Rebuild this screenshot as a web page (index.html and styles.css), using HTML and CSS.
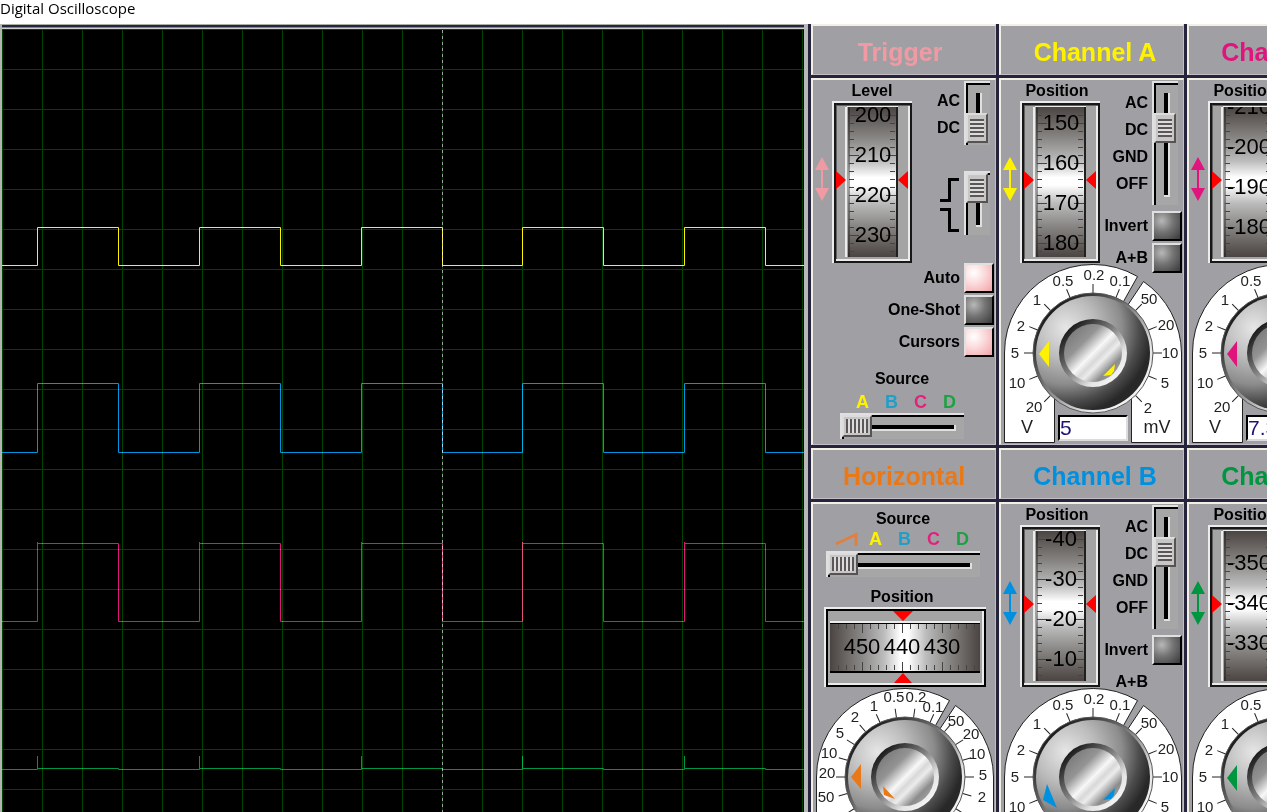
FILE: index.html
```
<!DOCTYPE html>
<html lang="en">
<head>
    <meta charset="utf-8">
    <title>Digital Oscilloscope</title>
    <link rel="stylesheet" href="styles.css">
</head>
<body>
    <!-- shared drawings -->
    <svg class="defs" width="0" height="0" aria-hidden="true">
        <defs>
            <pattern id="grid" width="40" height="40" patternUnits="userSpaceOnUse">
                <path d="M0 0.5H40M0.5 0V40" stroke="#004400" fill="none"/>
            </pattern>
            <linearGradient id="drumV" x1="0" y1="0" x2="0" y2="1">
                <stop offset="0" stop-color="#4a4442"/>
                <stop offset="0.2" stop-color="#868482"/>
                <stop offset="0.36" stop-color="#bcbcbc"/>
                <stop offset="0.47" stop-color="#fff"/>
                <stop offset="0.52" stop-color="#fff"/>
                <stop offset="0.64" stop-color="#bcbcbc"/>
                <stop offset="0.8" stop-color="#868482"/>
                <stop offset="1" stop-color="#4a4442"/>
            </linearGradient>
            <linearGradient id="drumH" href="#drumV" x2="1" y2="0"/>
            <linearGradient id="rim" x1="0.15" y1="0.15" x2="0.85" y2="0.85">
                <stop offset="0" stop-color="#1c1c1c"/>
                <stop offset="0.45" stop-color="#808080"/>
                <stop offset="0.8" stop-color="#e4e4e4"/>
                <stop offset="1" stop-color="#f4f4f4"/>
            </linearGradient>
            <radialGradient id="body" cx="0.26" cy="0.28" r="0.76">
                <stop offset="0" stop-color="#e6e6e6"/>
                <stop offset="0.35" stop-color="#bcbcbc"/>
                <stop offset="0.65" stop-color="#8c8c8c"/>
                <stop offset="0.85" stop-color="#4c4c4c"/>
                <stop offset="1" stop-color="#282828"/>
            </radialGradient>
            <linearGradient id="cap" x1="0.1" y1="0.1" x2="0.9" y2="0.9">
                <stop offset="0" stop-color="#787878"/>
                <stop offset="0.28" stop-color="#949494"/>
                <stop offset="0.5" stop-color="#f8f8f8"/>
                <stop offset="0.6" stop-color="#d8d8d8"/>
                <stop offset="0.68" stop-color="#ececec"/>
                <stop offset="0.85" stop-color="#8c8c8c"/>
                <stop offset="1" stop-color="#a4a4a4"/>
            </linearGradient>

            <symbol id="arrows" viewBox="0 0 14 52">
                <path d="M6 0L13 13H7V31H13L6 44L-1 31H5V13H-1Z" fill="currentColor"/>
            </symbol>

            <g id="frame">
                <path d="M0 162V0H80V2H2V162Z" fill="#ececec"/>
                <path d="M2 2H80V162H2Z" fill="#181818"/>
                <path d="M4 4H78V160H4Z" fill="#a4a4a4"/>
                <path d="M4 4H5V160H4ZM4 4H78V5H4Z" fill="#606060"/>
                <path d="M76 5H78V160H4V158H76ZM13 6H15V156H13ZM15 5H66V6H15Z" fill="#ececec"/>
                <path d="M16 6H65V156H16Z" fill="url(#drumV)"/>
                <path d="M64 6H66V156H64Z" fill="#202020"/>
                <path d="M16 6H18V156H16Z" fill="#000" opacity="0.35"/>
                <path d="M4 70L14 79L4 88ZM76 70L66 79L76 88Z" fill="#f00"/>
            </g>
            <g id="ticks" stroke="#444" fill="none">
                <path stroke-width="5" stroke-dasharray="1 7" d="M3.5 -40V200M44.5 -40V200"/>
                <path stroke-width="10" stroke-dasharray="1 39" d="M6 -40V200M43 -40V200"/>
            </g>

            <g id="face">
                <circle cx="90" cy="90" r="60" fill="url(#rim)" stroke="#555"/>
                <circle cx="90" cy="90" r="57" fill="url(#body)"/>
                <circle cx="90" cy="90" r="34" fill="url(#rim)"/>
                <circle cx="90" cy="90" r="29" fill="url(#cap)"/>
            </g>
            <g id="plate" fill="#fff" stroke="#222">
                <path d="M1.5 179.5V90A88.5 88.5 0 0 1 134.500 13.500L120.500 38.500L90 90L51.500 133.500V179.500Z"/>
                <path d="M140.500 18.500A88.500 88.500 0 0 1 178.500 90V179.500H128.500V133.500L90 90L124.500 42.500Z"/>
            </g>
            <g id="voltKnob">
                <use href="#plate"/>
                <g stroke="#222">
                    <path id="t" d="M90 21V30"/>
                    <use href="#t" transform="rotate(22.5 90 90)"/>
                    <use href="#t" transform="rotate(45 90 90)"/>
                    <use href="#t" transform="rotate(67.5 90 90)"/>
                    <use href="#t" transform="rotate(90 90 90)"/>
                    <use href="#t" transform="rotate(112.5 90 90)"/>
                    <use href="#t" transform="rotate(135 90 90)"/>
                    <use href="#t" transform="rotate(-22.5 90 90)"/>
                    <use href="#t" transform="rotate(-45 90 90)"/>
                    <use href="#t" transform="rotate(-67.5 90 90)"/>
                    <use href="#t" transform="rotate(-90 90 90)"/>
                    <use href="#t" transform="rotate(-112.5 90 90)"/>
                    <use href="#t" transform="rotate(-135 90 90)"/>
                </g>
                <use href="#face"/>
                <g class="scale">
                    <text x="31" y="149">20</text>
                    <text x="14" y="125">10</text>
                    <text x="12" y="95">5</text>
                    <text x="18" y="68">2</text>
                    <text x="34" y="42">1</text>
                    <text x="60" y="23">0.5</text>
                    <text x="91" y="17">0.2</text>
                    <text x="117" y="23">0.1</text>
                    <text x="146" y="41">50</text>
                    <text x="163" y="67">20</text>
                    <text x="167" y="95">10</text>
                    <text x="162" y="125">5</text>
                    <text x="145" y="150">2</text>
                    <text class="unit" x="24" y="170">V</text>
                    <text class="unit" x="154" y="170">mV</text>
                </g>
            </g>
        </defs>
    </svg>

    <header class="titlebar">Digital Oscilloscope</header>

    <main class="scope">
        <section class="screen">
            <svg width="100%" height="100%">
                <rect width="100%" height="100%" fill="url(#grid)"/>
                <path class="cursor" d="M440.5 1V843"/>
                <path class="trace trace-a" d="M-1 236.500H35.500V198.500H116.500V236.500H197.500V198.500H278.500V236.500H359.500V198.500H440.500V236.500H520.500V198.500H601.500V236.500H682.500V198.500H763.500V236.500H803"/>
                <path class="trace trace-b" d="M-1 423.500H35.500V354.500H116.500V423.500H197.500V354.500H278.500V423.500H359.500V354.500H440.500V423.500H520.500V354.500H601.500V423.500H682.500V354.500H763.500V423.500H803"/>
                <path class="trace trace-c" d="M-1 592.500H35.500V513V514.500H116.500V592.500H197.500V513V514.500H278.500V592.500H359.500V513V514.500H440.500V592.500H520.500V513V514.500H601.500V592.500H682.500V513V514.500H763.500V592.500H803"/>
                <path class="trace trace-d" d="M-1 740.500H35.500V727V739.500H116.500V740.500H197.500V727V739.500H278.500V740.500H359.500V727V739.500H440.500V740.500H520.500V727V739.500H601.500V740.500H682.500V727V739.500H763.500V740.500H803"/>
            </svg>
        </section>

        <div class="controls">
            <section class="panel trigger">
                <h2 class="panel-title">Trigger</h2>
                <div class="panel-body">
                    <div class="upper">
                        <svg class="arrows"><use href="#arrows"/></svg>
                        <div class="wheel">
                            <span class="wheel-label">Level</span>
                            <svg width="80" height="162">
                                <use href="#frame"/>
                                <svg x="16" y="6" width="49" height="150">
                                    <g transform="translate(0 8)">
                                        <use href="#ticks"/>
                                        <g class="digits">
                                            <text x="25" y="7">200</text>
                                            <text x="25" y="47">210</text>
                                            <text x="25" y="87">220</text>
                                            <text x="25" y="127">230</text>
                                        </g>
                                    </g>
                                </svg>
                            </svg>
                        </div>
                        <div class="side">
                            <div class="switch-row">
                                <div class="options"><span>AC</span><span>DC</span></div>
                                <input class="switch" type="range" min="0" max="1" value="1" aria-label="Trigger coupling">
                            </div>
                            <div class="switch-row edge">
                                <svg width="20" height="64" fill="none" stroke="#000" stroke-width="3">
                                    <path d="M0 29.500H9.500V8.500H19M0 38.500H9.500V59.500H19"/>
                                </svg>
                                <input class="switch" type="range" min="0" max="1" value="0" aria-label="Trigger edge">
                            </div>
                        </div>
                    </div>
                    <div class="buttons">
                        <label class="button-row">Auto <input class="lamp" type="checkbox" checked></label>
                        <label class="button-row">One-Shot <input class="lamp" type="checkbox"></label>
                        <label class="button-row">Cursors <input class="lamp" type="checkbox" checked></label>
                    </div>
                    <div class="source">
                        <label for="triggerSource">Source</label>
                        <div class="letters"><b class="a">A</b><b class="b">B</b><b class="c">C</b><b class="d">D</b></div>
                        <input class="slider" id="triggerSource" type="range" min="0" max="3" value="0">
                    </div>
                </div>
            </section>

            <section class="panel channel channel-a">
                <h2 class="panel-title">Channel A</h2>
                <div class="panel-body">
                    <div class="upper">
                        <svg class="arrows"><use href="#arrows"/></svg>
                        <div class="wheel">
                            <span class="wheel-label">Position</span>
                            <svg width="80" height="162">
                                <use href="#frame"/>
                                <svg x="16" y="6" width="49" height="150">
                                    <g transform="translate(0 16)">
                                        <use href="#ticks"/>
                                        <g class="digits">
                                            <text x="25" y="7">150</text>
                                            <text x="25" y="47">160</text>
                                            <text x="25" y="87">170</text>
                                            <text x="25" y="127">180</text>
                                        </g>
                                    </g>
                                </svg>
                            </svg>
                        </div>
                        <div class="side">
                            <div class="switch-row">
                                <div class="options"><span>AC</span><span>DC</span><span>GND</span><span>OFF</span></div>
                                <input class="switch" type="range" min="0" max="3" value="1" aria-label="Channel A coupling">
                            </div>
                            <label class="button-row">Invert <input class="lamp" type="checkbox"></label>
                            <label class="button-row">A+B <input class="lamp" type="checkbox"></label>
                        </div>
                    </div>
                    <div class="knob">
                        <svg width="180" height="182">
                            <use href="#voltKnob"/>
                            <path class="pointer" d="M46 78L36 91L46 104Z"/>
                            <path class="pointer" d="M112 101L111 108L108 112L100 113Z"/>
                        </svg>
                        <input class="value" type="text" value="5" aria-label="Channel A volts">
                    </div>
                </div>
            </section>

            <section class="panel channel channel-c">
                <h2 class="panel-title">Channel C</h2>
                <div class="panel-body">
                    <div class="upper">
                        <svg class="arrows"><use href="#arrows"/></svg>
                        <div class="wheel">
                            <span class="wheel-label">Position</span>
                            <svg width="80" height="162">
                                <use href="#frame"/>
                                <svg x="16" y="6" width="49" height="150">
                                    <g transform="translate(0 0)">
                                        <use href="#ticks"/>
                                        <g class="digits">
                                            <text x="25" y="7">-210</text>
                                            <text x="25" y="47">-200</text>
                                            <text x="25" y="87">-190</text>
                                            <text x="25" y="127">-180</text>
                                        </g>
                                    </g>
                                </svg>
                            </svg>
                        </div>
                        <div class="side">
                            <div class="switch-row">
                                <div class="options"><span>AC</span><span>DC</span><span>GND</span><span>OFF</span></div>
                                <input class="switch" type="range" min="0" max="3" value="1" aria-label="Channel C coupling">
                            </div>
                            <label class="button-row">Invert <input class="lamp" type="checkbox"></label>
                            <label class="button-row">C+D <input class="lamp" type="checkbox"></label>
                        </div>
                    </div>
                    <div class="knob">
                        <svg width="180" height="182">
                            <use href="#voltKnob"/>
                            <path class="pointer" d="M46 78L36 91L46 104Z"/>
                            <path class="pointer" d="M112 101L111 108L108 112L100 113Z"/>
                        </svg>
                        <input class="value" type="text" value="7.3" aria-label="Channel C volts">
                    </div>
                </div>
            </section>

            <section class="panel horizontal">
                <h2 class="panel-title">Horizontal</h2>
                <div class="panel-body">
                    <div class="source source-wide">
                        <label for="horizontalSource">Source</label>
                        <div class="letters">
                            <svg width="29" height="14" fill="none" stroke="#e08040" stroke-width="3"><path d="M4 12L24 2.500V14"/></svg>
                            <b class="a">A</b><b class="b">B</b><b class="c">C</b><b class="d">D</b>
                        </div>
                        <input class="slider" id="horizontalSource" type="range" min="0" max="4" value="0">
                    </div>
                    <div class="wheel wheel-wide">
                        <span class="wheel-label">Position</span>
                        <svg width="162" height="80">
                            <path d="M0 80V0H162V2H2V80Z" fill="#ececec"/>
                            <path d="M2 2H162V80H2Z" fill="#000"/>
                            <path d="M4 4H160V78H4Z" fill="#a4a4a4"/>
                            <path d="M158 4H160V78H4V76H158ZM6 14H156V16H6Z" fill="#ececec"/>
                            <path d="M6 16H156V65H6Z" fill="url(#drumH)"/>
                            <path d="M6 64H156V66H6ZM6 16H156V17H6Z" fill="#000"/>
                            <path d="M69 4H89L79 14ZM79 66L88 76H70Z" fill="#f00"/>
                            <svg x="6" y="16" width="150" height="49">
                                <path stroke="#444" stroke-width="5" stroke-dasharray="1 7" d="M8 3.500H150M8 44.500H150"/>
                                <path stroke="#444" stroke-width="9" stroke-dasharray="1 39" d="M32 5.500H130M32 43.500H130"/>
                                <g class="digits">
                                    <text x="32" y="31">450</text>
                                    <text x="72" y="31">440</text>
                                    <text x="112" y="31">430</text>
                                </g>
                            </svg>
                        </svg>
                    </div>
                    <div class="knob">
                        <svg width="180" height="182">
                            <use href="#plate"/>
                            <g stroke="#222">
                                <use href="#t" transform="rotate(8.2 90 90)"/>
                                <use href="#t" transform="rotate(24.6 90 90)"/>
                                <use href="#t" transform="rotate(41 90 90)"/>
                                <use href="#t" transform="rotate(57.4 90 90)"/>
                                <use href="#t" transform="rotate(73.8 90 90)"/>
                                <use href="#t" transform="rotate(90 90 90)"/>
                                <use href="#t" transform="rotate(106 90 90)"/>
                                <use href="#t" transform="rotate(122 90 90)"/>
                                <use href="#t" transform="rotate(-8.2 90 90)"/>
                                <use href="#t" transform="rotate(-24.6 90 90)"/>
                                <use href="#t" transform="rotate(-41 90 90)"/>
                                <use href="#t" transform="rotate(-57.4 90 90)"/>
                                <use href="#t" transform="rotate(-73.8 90 90)"/>
                                <use href="#t" transform="rotate(-90 90 90)"/>
                                <use href="#t" transform="rotate(-106 90 90)"/>
                                <use href="#t" transform="rotate(-122 90 90)"/>
                            </g>
                            <use href="#face"/>
                            <g class="scale">
                                <text x="20" y="135">100</text>
                                <text x="11" y="115">50</text>
                                <text x="12" y="91">20</text>
                                <text x="14" y="71">10</text>
                                <text x="25" y="51">5</text>
                                <text x="40" y="35">2</text>
                                <text x="59" y="24">1</text>
                                <text x="79" y="15">0.5</text>
                                <text x="101" y="15">0.2</text>
                                <text x="118" y="25">0.1</text>
                                <text x="141" y="39">50</text>
                                <text x="156" y="52">20</text>
                                <text x="162" y="72">10</text>
                                <text x="168" y="93">5</text>
                                <text x="167" y="115">2</text>
                                <text x="161" y="136">1</text>
                            </g>
                            <path class="pointer" d="M46 77L36 90L46 102Z"/>
                            <path class="pointer" d="M68 99L69 108L80 112Z"/>
                        </svg>
                    </div>
                </div>
            </section>

            <section class="panel channel channel-b">
                <h2 class="panel-title">Channel B</h2>
                <div class="panel-body">
                    <div class="upper">
                        <svg class="arrows"><use href="#arrows"/></svg>
                        <div class="wheel">
                            <span class="wheel-label">Position</span>
                            <svg width="80" height="162">
                                <use href="#frame"/>
                                <svg x="16" y="6" width="49" height="150">
                                    <g transform="translate(0 8)">
                                        <use href="#ticks"/>
                                        <g class="digits">
                                            <text x="25" y="7">-40</text>
                                            <text x="25" y="47">-30</text>
                                            <text x="25" y="87">-20</text>
                                            <text x="25" y="127">-10</text>
                                        </g>
                                    </g>
                                </svg>
                            </svg>
                        </div>
                        <div class="side">
                            <div class="switch-row">
                                <div class="options"><span>AC</span><span>DC</span><span>GND</span><span>OFF</span></div>
                                <input class="switch" type="range" min="0" max="3" value="1" aria-label="Channel B coupling">
                            </div>
                            <label class="button-row">Invert <input class="lamp" type="checkbox"></label>
                            <span class="button-row no-lamp">A+B</span>
                        </div>
                    </div>
                    <div class="knob">
                        <svg width="180" height="182">
                            <use href="#voltKnob"/>
                            <path class="pointer" d="M44 97L54 121L40 113Z"/>
                            <path class="pointer" d="M112 101L111 108L108 112L100 113Z"/>
                        </svg>
                    </div>
                </div>
            </section>

            <section class="panel channel channel-d">
                <h2 class="panel-title">Channel D</h2>
                <div class="panel-body">
                    <div class="upper">
                        <svg class="arrows"><use href="#arrows"/></svg>
                        <div class="wheel">
                            <span class="wheel-label">Position</span>
                            <svg width="80" height="162">
                                <use href="#frame"/>
                                <svg x="16" y="6" width="49" height="150">
                                    <g transform="translate(0 32)">
                                        <use href="#ticks"/>
                                        <g class="digits">
                                            <text x="25" y="7">-350</text>
                                            <text x="25" y="47">-340</text>
                                            <text x="25" y="87">-330</text>
                                        </g>
                                    </g>
                                </svg>
                            </svg>
                        </div>
                        <div class="side">
                            <div class="switch-row">
                                <div class="options"><span>AC</span><span>DC</span><span>GND</span><span>OFF</span></div>
                                <input class="switch" type="range" min="0" max="3" value="1" aria-label="Channel D coupling">
                            </div>
                            <label class="button-row">Invert <input class="lamp" type="checkbox"></label>
                            <span class="button-row no-lamp">C+D</span>
                        </div>
                    </div>
                    <div class="knob">
                        <svg width="180" height="182">
                            <use href="#voltKnob"/>
                            <path class="pointer" d="M46 78L36 91L46 104Z"/>
                            <path class="pointer" d="M112 101L111 108L108 112L100 113Z"/>
                        </svg>
                    </div>
                </div>
            </section>
        </div>
    </main>
</body>
</html>
```

FILE: styles.css
```
* {
    box-sizing: border-box;
}
body {
    margin: 0;
    height: 100vh;
    display: flex;
    flex-direction: column;
    overflow: hidden;
    background: #fff;
    color: #000;
    font-family: "Liberation Sans", Arial, sans-serif;
    font-size: 16px;
    font-weight: bold;
}
.defs {
    position: absolute;
}
svg {
    display: block;
    flex: none;
}
input {
    appearance: none;
    margin: 0;
    border: 0;
}

.titlebar {
    height: 24px;
    line-height: 16px;
    font-family: "Open Sans", "Noto Sans", sans-serif;
    font-size: 15px;
    font-weight: normal;
}
.scope {
    flex: 1;
    display: flex;
    min-height: 0;
    background: #a0a0a4;
}

/* screen */
.screen {
    flex: 1;
    min-width: 0;
    padding-top: 5px;
    border-left: 2px solid #b4b4b4;
    border-right: 4px solid #b8b8b8;
    background: linear-gradient(#a8b0a8 0 1px, #26263e 1px 3px, #84848c 3px 4px, #d0d0d0 4px 5px, #000 5px);
}
.cursor {
    stroke: #a0a0a0;
    stroke-dasharray: 3 3;
}
.trace {
    fill: none;
    mix-blend-mode: screen;
}
.trace-a { stroke: #fff200; }
.trace-b { stroke: #0094e0; }
.trace-c { stroke: #e0147c; }
.trace-d { stroke: #009444; }

/* panels */
.controls {
    flex: 0 1 459px;
    display: grid;
    grid-template-columns: repeat(3, 188px);
    align-content: start;
    overflow: hidden;
}
.panel {
    border-left: 3px solid #26243a;
}
.panel-title,
.panel-body {
    border: solid #f2f0e4;
    border-width: 2px 1px 1px 2px;
    border-right-color: #c4bcc8;
    border-bottom-color: #c4bcc8;
    box-shadow: 0 3px #26243a;
    margin-bottom: 3px;
}
.panel-title {
    height: 51px;
    margin-top: 0;
    padding-top: 3px;
    line-height: 46px;
    font-size: 25px;
    text-align: center;
}
.panel-body {
    height: 367px;
    padding: 1px 0 0 1px;
}
.trigger { --color: #f09aa4; }
.horizontal { --color: #e87818; }
.channel-a { --color: #fff200; }
.channel-b { --color: #0090e0; }
.channel-c { --color: #e0147c; }
.channel-d { --color: #009640; }
.panel-title,
.arrows {
    color: var(--color);
}
.pointer {
    fill: var(--color);
}
.channel .panel-title {
    padding-left: 6px;
}
.trigger .panel-title {
    padding-right: 8px;
}

.upper {
    display: grid;
    grid-template-columns: 14px 80px 80px;
    gap: 2px;
    padding-left: 2px;
}
.arrows {
    width: 14px;
    height: 52px;
    margin-top: 76px;
    overflow: visible;
}
.arrows symbol,
#arrows {
    overflow: visible;
}
.wheel-label {
    display: block;
    line-height: 20px;
    text-align: center;
}
.channel .wheel-label,
.wheel-wide .wheel-label {
    padding-right: 6px;
}
.wheel-wide {
    width: 162px;
    margin: 10px 0 0 10px;
}
.digits {
    font-size: 22px;
    font-weight: normal;
    text-anchor: middle;
}

/* switches and lamps */
.switch-row {
    display: flex;
    justify-content: flex-end;
    gap: 4px;
    padding-right: 4px;
    margin-bottom: 6px;
}
.edge {
    margin-top: 26px;
}
.options {
    padding-top: 8px;
    display: flex;
    flex-direction: column;
    line-height: 27px;
    text-align: right;
}
.trigger .options {
    padding-top: 6px;
}
.switch,
.slider {
    padding: 2px;
    background-color: #a6a6a6;
    background-origin: border-box;
    background-repeat: no-repeat;
    background-image:
        linear-gradient(#e0e0e0, #e0e0e0),
        linear-gradient(#e0e0e0, #e0e0e0),
        linear-gradient(#000, #000),
        linear-gradient(#000, #000),
        linear-gradient(#000, #000),
        linear-gradient(#e0e0e0, #e0e0e0);
}
.switch {
    writing-mode: vertical-lr;
    width: 26px;
    height: 124px;
    background-position: 0 0, 0 0, 2px 2px, 2px 2px, 12px 12px, 12px 12px;
    background-size: 100% 2px, 2px 100%, 100% 2px, 2px 100%, 4px calc(100% - 22px), 6px calc(100% - 20px);
}
.trigger .switch {
    height: 64px;
}
.slider {
    display: block;
    width: 100%;
    height: 26px;
    background-position: 0 0, 0 0, 2px 2px, 2px 2px, 12px 12px, 12px 12px;
    background-size: 100% 2px, 2px 100%, 100% 2px, 2px 100%, calc(100% - 22px) 4px, calc(100% - 20px) 6px;
}
.switch::-webkit-slider-thumb,
.slider::-webkit-slider-thumb {
    appearance: none;
    border: 2px solid;
    border-color: #dcdcdc #585252 #585252 #dcdcdc;
    background-color: #c6c6c6;
    background-position: center;
    background-repeat: no-repeat;
}
.switch::-webkit-slider-thumb {
    width: 22px;
    height: 30px;
    background-image: repeating-linear-gradient(#5c5656 0 2px, #dcdcdc 2px 4px);
    background-size: 14px 18px;
}
.slider::-webkit-slider-thumb {
    width: 30px;
    height: 22px;
    background-image: repeating-linear-gradient(90deg, #5c5656 0 2px, #dcdcdc 2px 4px);
    background-size: 22px 14px;
}
.buttons {
    width: 180px;
}
.button-row {
    display: flex;
    justify-content: flex-end;
    align-items: center;
    gap: 4px;
    height: 30px;
    margin-bottom: 2px;
}
.no-lamp {
    padding-right: 34px;
}
.lamp {
    width: 30px;
    height: 30px;
    border: 2px solid;
    border-color: #e0e0e0 #000 #000 #e0e0e0;
    background: radial-gradient(circle at 30% 30%, #b8b8b8, #747474 45%, #383838);
}
.lamp:checked {
    background: radial-gradient(circle at 30% 30%, #fff, #fbd8da 45%, #f0a4a8);
}

/* source selectors */
.source {
    width: 124px;
    margin: 12px 0 0 26px;
    line-height: 20px;
    text-align: center;
}
.source label {
    display: block;
}
.letters {
    display: flex;
    align-items: center;
    height: 24px;
    padding: 2px 0 0 8px;
    font-size: 18px;
}
.letters b {
    flex: 0 0 29px;
}
.letters .a { color: #fff200; }
.letters .b { color: #1f9fc8; }
.letters .c { color: #e4207c; }
.letters .d { color: #1fa044; }
.source-wide {
    width: 154px;
    margin: 4px 0 0 12px;
}
.source-wide .letters {
    height: 22px;
    padding: 0 0 2px 6px;
}

/* knobs */
.knob {
    display: grid;
    width: 180px;
    margin: -12px 0 0 1px;
}
.horizontal .knob {
    margin-top: 0;
}
.knob > * {
    grid-area: 1 / 1;
}
.scale {
    font-size: 15px;
    font-weight: normal;
    text-anchor: middle;
    fill: #222;
}
.unit {
    font-size: 18px;
}
.value {
    align-self: end;
    justify-self: center;
    width: 70px;
    height: 26px;
    margin-bottom: 4px;
    padding: 0;
    border: 2px solid;
    border-color: #000 #dcdcdc #dcdcdc #000;
    background: #fff;
    color: #1c1474;
    font: 21px "Liberation Sans", Arial, sans-serif;
}
```
